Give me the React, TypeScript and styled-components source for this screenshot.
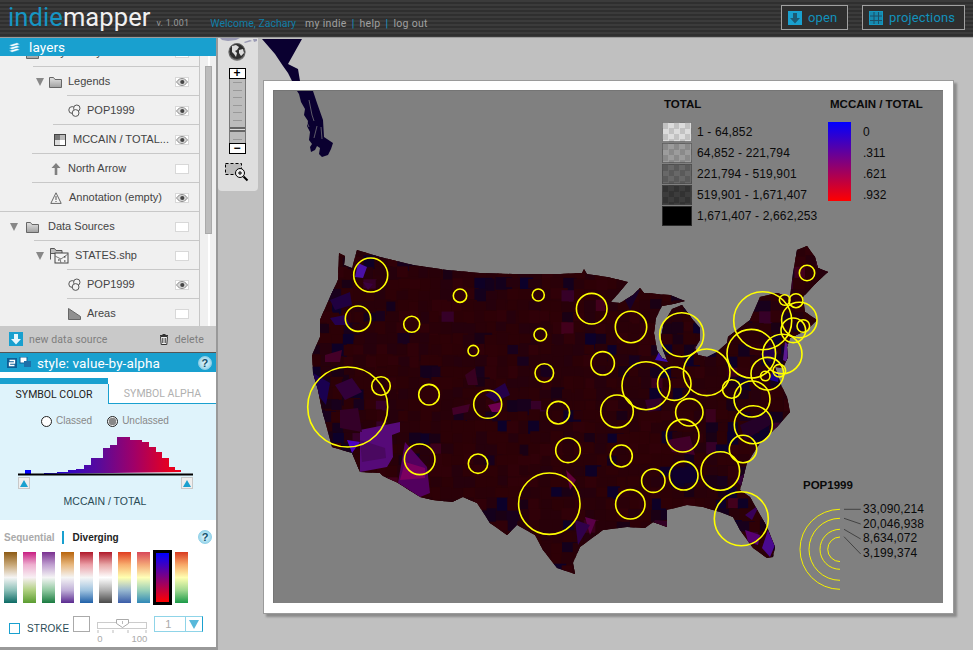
import React from 'react'
import styled, { createGlobalStyle } from 'styled-components'

const BLUE = '#19a0cf'
const UI = '"Roboto", "Liberation Sans", sans-serif'
const SANS = '"Liberation Sans", Arial, sans-serif'

const GlobalStyle = createGlobalStyle`
  html, body { margin: 0; padding: 0; background: #c0c0c0; }
  body { font-family: ${SANS}; overflow: hidden; }
  * { box-sizing: border-box; }
`

/* ---------- map data, page coordinates ---------- */

const US_OUTLINE =
  '339,253 345,256 344,265 352,268 357,250 380,257 413,265 447,270 480,273 513,274 560,274 582,273 584,269 587,274 607,277 628,282 ' +
  '611,302 620,303 633,295 640,288 644,293 670,295 685,301 673,304 662,306 656,318 654,333 657,350 662,358 667,360 663,350 661,337 664,323 672,309 682,305 ' +
  '693,320 700,328 700,340 695,348 698,355 707,357 717,352 727,343 728,337 737,330 750,320 760,297 777,293 790,297 793,273 797,250 807,246 ' +
  '815,257 818,268 828,272 817,282 803,297 805,312 817,320 807,330 790,338 787,347 788,357 783,368 775,367 782,387 787,397 790,412 777,427 ' +
  '760,443 747,463 740,490 750,497 767,527 775,547 773,557 767,558 753,548 740,530 733,517 720,512 703,507 687,505 667,510 667,527 653,522 ' +
  '645,528 627,527 603,530 580,547 573,563 575,574 557,568 543,550 535,535 517,525 507,535 490,523 477,503 463,497 452,502 433,500 420,497 ' +
  '398,483 383,476 380,473 360,472 352,453 332,447 328,432 322,410 318,390 313,373 312,355 320,337 320,320 330,297 338,280'

const PATCHES: [string, string][] = [
  ['360,430 400,422 400,432 392,435 393,457 387,467 360,472', '#560a78'],
  ['360,440 385,448 386,458 362,462', '#4a0860'],
  ['405,442 427,467 430,493 420,497 398,483', '#52005e'],
  ['405,462 425,468 425,478 400,480', '#7c0060'],
  ['347,440 360,442 352,453', '#4a00c0'],
  ['358,263 367,267 363,278 355,277', '#4a10a8'],
  ['363,282 373,284 368,290', '#3a0040'],
  ['313,373 330,383 326,405 318,395', '#1a0050'],
  ['335,385 352,378 362,392 345,400', '#32003a'],
  ['340,410 358,408 362,432 340,428', '#340028'],
  ['325,355 342,350 340,362 325,362', '#440028'],
  ['330,300 350,292 352,305 335,310', '#200040'],
  ['330,318 345,315 350,325 335,325', '#240050'],
  ['452,408 470,404 468,412 453,415', '#420028'],
  ['485,395 505,383 510,395 495,402', '#240048'],
  ['488,405 502,402 500,412 492,412', '#700050'],
  ['465,375 475,368 478,385 468,385', '#380020'],
  ['768,530 775,545 770,557 762,548', '#4a0a90'],
  ['745,530 760,535 758,545 748,542', '#560070'],
  ['760,504 752,520 745,515', '#380058'],
  ['785,342 789,345 787,362 783,360', '#5a1a90'],
  ['760,355 770,345 778,352 770,362', '#240048'],
  ['772,372 780,370 778,382 770,380', '#160090'],
  ['655,360 660,350 668,362', '#3a10b0'],
  ['640,545 655,520 680,522 660,540', '#320024'],
  ['585,517 596,520 590,535', '#5a0048'],
  ['566,470 576,480 570,490', '#60003a'],
  ['575,520 590,525 578,545', '#30004a'],
  ['645,400 662,398 660,410 648,412', '#32002a'],
  ['667,440 690,436 695,455 672,452', '#400028'],
  ['672,470 695,465 700,482 675,484', '#0e002c'],
  ['740,425 770,412 770,425 745,440', '#240028'],
  ['735,480 750,470 745,490', '#320038'],
  ['620,290 640,290 630,310', '#180028'],
]

const mulberry = (seed: number) => () => {
  seed |= 0
  seed = (seed + 0x6d2b79f5) | 0
  let t = Math.imul(seed ^ (seed >>> 15), 1 | seed)
  t = (t + Math.imul(t ^ (t >>> 7), 61 | t)) ^ t
  return ((t ^ (t >>> 14)) >>> 0) / 4294967296
}

const makeTiles = () => {
  const rnd = mulberry(1999)
  const warm = ['#2a0008', '#2c0006', '#280009', '#2e0006', '#26000c', '#300008']
  const cool = ['#1a0014', '#14001c', '#0e0026', '#18001c', '#0c002a']
  const hot = ['#3a001c', '#360028', '#42001c']
  const tiles: { x: number; y: number; w: number; h: number; fill: string }[] = []
  for (let y = 244; y < 580; y += 11) {
    for (let x = 308; x < 832; x += 11) {
      const east = x > 640
      const west = x < 350
      const r = rnd()
      const coolOdds = west ? 0.45 : east ? 0.28 : 0.12
      const hotOdds = east ? 0.06 : 0.015
      const set = r < hotOdds ? hot : r < hotOdds + coolOdds ? cool : warm
      tiles.push({
        x: x + rnd() * 3,
        y: y + rnd() * 3,
        w: 9 + rnd() * 9,
        h: 9 + rnd() * 9,
        fill: set[Math.floor(rnd() * set.length)],
      })
    }
  }
  return tiles
}

const TILES = makeTiles()

const SYMBOLS: [number, number, number][] = [
  [370.7, 275, 17], [358, 318.7, 12.7], [411.7, 324.3, 8], [460, 295.7, 6.7], [538.3, 295, 6],
  [540.3, 334.7, 6.3], [473.3, 350.7, 5.3], [544.3, 373, 9.3], [429, 394.7, 10.3], [487.7, 404.3, 14],
  [558.3, 412.7, 11.3], [381, 386, 9.3], [347.7, 407, 40], [568, 450.3, 12.3], [419.7, 459.3, 15.3],
  [478, 463.7, 9.7], [549.3, 503.7, 30.7], [591.7, 308.7, 15.3], [631, 327, 15.7], [602.7, 363.3, 11.7],
  [681.7, 334.7, 22], [646, 385.7, 24], [674.3, 383.7, 16.7], [706.7, 372.3, 23.3], [617, 411.3, 16.3],
  [689.3, 412.3, 13.7], [682.7, 435.7, 16.3], [621.3, 456, 11], [653.3, 480.7, 11.7], [683.7, 475.7, 14.3],
  [720.3, 471, 19.3], [630.3, 504.3, 14.7], [741.3, 518.7, 27], [743, 449, 13.7], [753.3, 424.7, 19],
  [752, 399, 18], [731.7, 389, 9.3], [751.3, 353.7, 24.3], [782.3, 354, 19.7], [767.3, 373.7, 16.3],
  [779.3, 370.7, 6.3], [765.3, 376, 4.7], [762.7, 320.7, 29], [799.3, 320, 17.7], [793.3, 330.3, 12.3],
  [803.3, 326, 6.3], [784.7, 300, 5.3], [796, 300.7, 7], [807, 273, 7.7],
]

const TOTAL_LEGEND: [string, string, string][] = [
  ['1 - 64,852', '#dcdcdc', '#c2c2c2'],
  ['64,852 - 221,794', '#9c9c9c', '#8a8a8a'],
  ['221,794 - 519,901', '#686868', '#5a5a5a'],
  ['519,901 - 1,671,407', '#3c3c3c', '#323232'],
  ['1,671,407 - 2,662,253', '#000', '#000'],
]

const POP_RADII = [40, 31, 20, 12.3]

const RAMPS: string[][] = [
  ['#8c5a14', '#c8a878', '#f5f5f5', '#8cc0b8', '#0c6a64'],
  ['#c81e82', '#eeb0d0', '#f8f0f4', '#b0d080', '#5a9c30'],
  ['#7a3090', '#c0a0d0', '#f5f5f5', '#90c8a0', '#1a7a40'],
  ['#b8640c', '#e8b880', '#f5f5f5', '#c0b0d8', '#5a2a90'],
  ['#b0182a', '#eca0a8', '#f5f5f5', '#a0c4e0', '#2060a8'],
  ['#b0182a', '#e8a8a8', '#ffffff', '#b0b0b0', '#4a4a4a'],
  ['#e03c20', '#f8b070', '#ffffb0', '#98b8d0', '#3a5ca8'],
  ['#d84858', '#f4a878', '#ffffb8', '#98d0b8', '#3088b8'],
  ['#0000ff', '#ff0000'],
  ['#d83a20', '#f8a868', '#ffffb0', '#a0d890', '#1a9a48'],
]

/* ---------- small drawings ---------- */

const FolderIcon = () => (
  <svg width="13" height="12" viewBox="0 0 13 12">
    <defs>
      <linearGradient id="folderFill" x1="0" y1="0" x2="0" y2="1">
        <stop offset="0" stopColor="#e2e2e2" />
        <stop offset="1" stopColor="#a0a0a0" />
      </linearGradient>
    </defs>
    <path d="M.5 11.5V1.5h4l1.5 2h6.5v8z" fill="url(#folderFill)" stroke="#666" />
  </svg>
)

const CirclesIcon = () => (
  <svg width="13" height="13" viewBox="0 0 13 13">
    <g fill="#f4f4f4" stroke="#555">
      <circle cx="4.2" cy="6" r="3.4" />
      <circle cx="8.8" cy="4.2" r="3.2" />
      <circle cx="7.6" cy="9" r="3.4" />
    </g>
  </svg>
)

const ChoroplethIcon = () => (
  <svg width="12" height="12" viewBox="0 0 12 12">
    <rect x=".5" y=".5" width="11" height="11" fill="#fff" stroke="#444" />
    <rect x="1" y="1" width="5" height="5" fill="#777" />
    <rect x="6" y="1" width="5" height="5" fill="#bbb" />
    <rect x="1" y="6" width="5" height="5" fill="#ddd" />
  </svg>
)

const ArrowIcon = () => (
  <svg width="10" height="12" viewBox="0 0 10 12">
    <path d="M5 0l4.5 5H6.3v7H3.7V5H.5z" fill="#808080" />
  </svg>
)

const WarnIcon = () => (
  <svg width="12" height="12" viewBox="0 0 12 12">
    <path d="M6 .8l5.2 10.6H.8z" fill="#f4f4f4" stroke="#666" />
    <path d="M6 4v4M6 9v1" stroke="#555" />
  </svg>
)

const ShapeFolderIcon = () => (
  <svg width="19" height="16" viewBox="0 0 19 16">
    <path d="M.5 11.5V.5h4l1.5 2h6v3H.5" fill="#bbb" stroke="#555" />
    <rect x="5" y="5" width="13" height="10" fill="#f4f4f4" stroke="#444" />
    <path d="M5 8l6 3 7-5M10 11l1 4" stroke="#777" fill="none" />
    <path d="M8 12h1.5M14 9h1.5M14 13h1.5" stroke="#222" />
  </svg>
)

const AreaIcon = () => (
  <svg width="13" height="12" viewBox="0 0 13 12">
    <path d="M.5.5l12 8v3H.5z" fill="#909090" stroke="#666" />
  </svg>
)

const Eye = () => (
  <svg width="12" height="8" viewBox="0 0 12 8">
    <path d="M.5 4C2.5 1.2 4.2.5 6 .5s3.500.7 5.500 3.500C9.500 6.800 7.800 7.500 6 7.500S2.500 6.800.5 4z" fill="#d8d8d8" stroke="#777" strokeWidth=".8" />
    <circle cx="6.300" cy="4" r="2.100" fill="#444" />
  </svg>
)

const Triangle = () => (
  <svg width="8" height="8" viewBox="0 0 8 8">
    <path d="M0 0h8L4 8z" fill="#888" />
  </svg>
)

const DownBox = ({ size }: { size: number }) => (
  <svg width={size} height={size} viewBox="0 0 14 14">
    <rect width="14" height="14" fill={BLUE} />
    <path d="M5 2h4v5h3l-5 5.500L2 7h3z" fill="#1d5a74" />
  </svg>
)

const FootDown = () => (
  <svg width="14" height="14" viewBox="0 0 14 14">
    <rect width="14" height="14" fill={BLUE} />
    <path d="M5 2h4v5h3l-5 5.500L2 7h3z" fill="#e6f6fc" />
  </svg>
)

const StackIcon = () => (
  <svg width="13" height="11" viewBox="0 0 13 11">
    <path d="M1 3.200L9 .8l3 1.400-8 2.400zM1 6l8-2.400 3 1.400-8 2.400zM1 8.800l8-2.400 3 1.400-8 2.400z" fill="#fff" stroke={BLUE} strokeWidth=".4" />
  </svg>
)

const StyleIcon = () => (
  <svg width="24" height="12" viewBox="0 0 24 12">
    <rect x="0" y="1" width="10" height="10" fill="#0d5f96" />
    <path d="M2.500 3.500h5v2.500h-5v2.500h5" fill="none" stroke="#fff" strokeWidth="1.300" />
    <rect x="13" y="0" width="7" height="6" fill="#fff" stroke="#0d5f96" />
    <rect x="17" y="4" width="7" height="6" fill="#1d6fa8" />
  </svg>
)

const TrashIcon = () => (
  <svg width="10" height="12" viewBox="0 0 10 12">
    <path d="M1 2.500h8M3.500 1.500h3" stroke="#333" />
    <path d="M1.500 3.500h7l-.7 8H2.200z" fill="#eee" stroke="#333" />
    <path d="M3.800 5v5M6.200 5v5" stroke="#333" />
  </svg>
)

const GlobeIcon = () => (
  <svg width="20" height="20" viewBox="0 0 20 20">
    <circle cx="10" cy="10.500" r="8.500" fill="#888" />
    <circle cx="10" cy="9.500" r="8" fill="#2e2e2e" stroke="#666" />
    <path d="M5 4l4-1 3 2-2 3-2 1 2 2-1 4-2-3-2-2zM12 8l4-1 1 4-3 3-2-3z" fill="#dcdcdc" />
  </svg>
)

const ZoomRectIcon = () => (
  <svg width="24" height="20" viewBox="0 0 24 20">
    <rect x=".5" y=".5" width="16" height="11" fill="#bbb" stroke="#000" strokeDasharray="3 2" />
    <circle cx="15" cy="10" r="4.500" fill="#eee" stroke="#000" />
    <path d="M13 10h4M15 8v4" stroke="#000" />
    <path d="M18.500 13.500l4 4" stroke="#000" strokeWidth="2" />
  </svg>
)

const GridIcon = () => (
  <svg width="14" height="14" viewBox="0 0 14 14">
    <rect width="14" height="14" fill="#1689ae" />
    <path d="M1 5h12M1 9.500h12M5 1v12M9.500 1v12" stroke="#1d4f66" />
    <rect x=".5" y=".5" width="13" height="13" fill="none" stroke="#1597c0" />
  </svg>
)

const Histogram = () => (
  <svg width="176" height="42" viewBox="0 0 176 42">
    <defs>
      <linearGradient id="histFill" x1="0" x2="1" y1="0" y2="0">
        <stop offset="0" stopColor="#0000ff" />
        <stop offset="0.48" stopColor="#5a0a9a" />
        <stop offset="0.7" stopColor="#a00068" />
        <stop offset="0.93" stopColor="#e8001e" />
      </linearGradient>
    </defs>
    <path
      d="M7 40V36h6v4zM26 40v-1h13v-1h11v-2h8v-1h8v-4h7v-7h12v-10h7v-3h7V3h13v3h12v2h7v5h7v5h6v6h7v9h6v3h6v2z"
      fill="url(#histFill)"
    />
    <rect x="0" y="39.500" width="175" height="2" fill="#000" />
  </svg>
)

/* ---------- header ---------- */

const Page = styled.div`
  width: 973px;
  height: 650px;
  overflow: hidden;
  display: flex;
  flex-direction: column;
  background: #c0c0c0;
`

const TopBar = styled.header`
  height: 38px;
  flex: none;
  display: flex;
  align-items: flex-start;
  padding-left: 8px;
  border-bottom: 1px solid #9c9c9c;
  background: repeating-linear-gradient(#3b3b3b 0 2px, #2f2f2f 2px 4px);
  font-family: ${UI};
`

const Logo = styled.div`
  font-size: 25.500px;
  font-weight: 400;
  line-height: 30px;
  margin-top: 2px;
  letter-spacing: .1px;
  color: #f0f0f0;
  span { color: #1696c4; }
`

const Version = styled.div`
  font-size: 9px;
  color: #999;
  margin: 18px 0 0 6px;
  letter-spacing: .2px;
`

const Welcome = styled.nav`
  margin: 17px 0 0 21px;
  font-size: 10.500px;
  display: flex;
  gap: 5px;
  color: #a0a0a0;
  letter-spacing: .3px;
  b { font-weight: 400; color: #0f7ea8; margin-right: 4px; letter-spacing: 0; }
  i { font-style: normal; color: #1696c4; }
`

const TopButton = styled.button<{ $width: number; $gapRight: number }>`
  width: ${p => p.$width}px;
  height: 25px;
  margin: 5px ${p => p.$gapRight}px 0 0;
  padding: 0 0 0 6px;
  display: flex;
  align-items: center;
  gap: 6px;
  background: #2e2e2e;
  border: 1px solid #a0a0a0;
  color: #1291bb;
  font: 13px ${UI};
  letter-spacing: .15px;
`

const Spacer = styled.div`
  flex: 1;
`

/* ---------- layers panel ---------- */

const Workspace = styled.div`
  flex: 1;
  min-height: 0;
  display: flex;
  align-items: flex-start;
`

const Sidebar = styled.aside`
  width: 218px;
  height: 612px;
  flex: none;
  position: relative;
  z-index: 2;
  display: flex;
  flex-direction: column;
  background: #fff;
  border-right: 2px solid #999;
  border-bottom: 3px solid #999;
`

const PanelHead = styled.div<{ $height: number }>`
  height: ${p => p.$height}px;
  flex: none;
  display: flex;
  align-items: center;
  background: ${BLUE};
  color: #fff;
  font: 13.500px ${UI};
  letter-spacing: .1px;
`

const LayerArea = styled.div`
  height: 270px;
  flex: none;
  display: flex;
  background: #f0f0f0;
  overflow: hidden;
`

const LayerList = styled.div`
  width: 200px;
  flex: none;
  margin-top: -18px;
  border-right: 1px solid #c6c6c6;
`

const Row = styled.div<{ $left: number; $rule: number }>`
  height: 29px;
  display: flex;
  align-items: center;
  padding: 0 10px 0 ${p => p.$left}px;
  background: linear-gradient(#c8c8c8, #c8c8c8) no-repeat right bottom / calc(100% - ${p => p.$rule}px) 1px;
  color: #444;
  font: 11px ${SANS};
`

const RowIcon = styled.span<{ $width: number }>`
  width: ${p => p.$width}px;
  flex: none;
  display: flex;
  align-items: center;
`

const RowLabel = styled.span`
  flex: 1;
  white-space: nowrap;
  margin-top: -2px;
`

const Toggle = styled.span`
  width: 14px;
  height: 10px;
  flex: none;
  display: flex;
  align-items: center;
  justify-content: center;
  background: #fff;
  border: 1px solid #d8d8d8;
  overflow: hidden;
`

const ScrollTrack = styled.div`
  flex: 1;
  padding: 10px 0 0 5px;
  background: linear-gradient(#fff, #fff) no-repeat 8px 0 / 2px 100%;
`

const ScrollThumb = styled.div`
  width: 7px;
  height: 168px;
  background: #bcbcbc;
  border: 1px solid #aaa;
`

const LayerFoot = styled.div`
  height: 26px;
  flex: none;
  display: flex;
  align-items: center;
  padding: 0 12px 0 9px;
  gap: 6px;
  background: #c9c9c9;
  color: #7e7e7e;
  font: 10.500px ${UI};
  letter-spacing: .1px;
`

/* ---------- style panel ---------- */

const Tabs = styled.div`
  height: 26px;
  margin-top: 6px;
  flex: none;
  display: flex;
`

const Tab = styled.div<{ $active?: boolean }>`
  width: 108px;
  flex: none;
  display: flex;
  align-items: center;
  justify-content: center;
  font: 10.500px ${UI};
  color: ${p => (p.$active ? '#222' : '#b0b0b0')};
  background: ${p => (p.$active ? '#dff3fb' : '#fff')};
  border-top: ${p => (p.$active ? `6px solid ${BLUE}` : '0')};
  border-left: ${p => (p.$active ? '0' : `1px solid ${BLUE}`)};
  border-bottom: ${p => (p.$active ? '0' : `1px solid ${BLUE}`)};
  margin-top: ${p => (p.$active ? '0' : '6px')};
`

const ClassPane = styled.div`
  height: 116px;
  flex: none;
  display: flex;
  flex-direction: column;
  align-items: stretch;
  background: #dff3fb;
  padding-top: 11px;
`

const RadioRow = styled.div`
  display: flex;
  padding-left: 41px;
  font: 10px ${SANS};
  color: #888;
  line-height: 12px;
`

const RadioItem = styled.label`
  display: flex;
  align-items: center;
  gap: 4px;
  margin-right: 15px;
`

const Radio = styled.span<{ $on?: boolean }>`
  width: 11px;
  height: 11px;
  border-radius: 50%;
  border: 1px solid #222;
  background: ${p => (p.$on ? 'radial-gradient(#888 0 3.500px, #eee 4px)' : '#fff')};
`

const HistogramBox = styled.div`
  height: 42px;
  margin: 7px 0 0 18px;
`

const Handles = styled.div`
  display: flex;
  justify-content: space-between;
  padding: 1px 23px 0 18px;
`

const Handle = styled.span`
  width: 12px;
  height: 12px;
  display: flex;
  align-items: center;
  justify-content: center;
  background: #eee;
  border: 1px solid #c8c8c8;
  &::after {
    content: '';
    border-left: 4px solid transparent;
    border-right: 4px solid transparent;
    border-bottom: 7px solid ${BLUE};
  }
`

const FieldName = styled.div`
  text-align: center;
  margin-top: 6px;
  padding-right: 6px;
  font: 10.500px ${SANS};
  color: #2a4a55;
`

const RampPane = styled.div`
  flex: 1;
  padding: 10px 0 0 4px;
  background: #fff;
`

const RampTabs = styled.div`
  height: 14px;
  display: flex;
  align-items: center;
  font: bold 10px ${SANS};
  color: #aaa;
  padding-right: 4px;
  b { color: #222; }
`

const Divide = styled.span`
  width: 2px;
  height: 13px;
  margin: 0 9px 0 7px;
  background: ${BLUE};
`

const Help = styled.span<{ $size: number }>`
  width: ${p => p.$size}px;
  height: ${p => p.$size}px;
  margin-left: auto;
  border-radius: 50%;
  display: flex;
  align-items: center;
  justify-content: center;
  background: radial-gradient(#e8f8fd, #7fcbe6);
  border: 1px solid #8fd0e8;
  color: #14506a;
  font: bold 11px ${SANS};
`

const Ramps = styled.div`
  display: flex;
  align-items: center;
  gap: 6px;
  margin-top: 6px;
  height: 55px;
`

const Ramp = styled.div<{ $selected?: boolean }>`
  width: ${p => (p.$selected ? 19 : 13)}px;
  height: ${p => (p.$selected ? 55 : 51)}px;
  margin: 0 ${p => (p.$selected ? -3 : 0)}px;
  border: ${p => (p.$selected ? '3px solid #000' : '0')};
`

const StrokeRow = styled.div`
  display: flex;
  align-items: flex-start;
  margin-top: 11px;
  padding-left: 5px;
  height: 30px;
  font: 10px ${SANS};
  color: #2a4a55;
`

const CheckBox = styled.span`
  width: 11px;
  height: 11px;
  margin-top: 7px;
  border: 1px solid ${BLUE};
`

const StrokeLabel = styled.span`
  margin: 7px 4px 0 7px;
  line-height: 12px;
  letter-spacing: .2px;
`

const StrokeSwatch = styled.span`
  width: 17px;
  height: 16px;
  border: 1px solid #aaa;
`

const OpacitySlider = styled.div`
  width: 50px;
  margin: 3px 7px 0 7px;
  color: #aaa;
  font: 9.500px ${SANS};
`

const SliderLabels = styled.div`
  display: flex;
  justify-content: space-between;
  line-height: 10px;
  margin-top: 1px;
`

const Picker = styled.div`
  width: 49px;
  height: 16px;
  display: flex;
  border: 1px solid #8fd4e8;
  border-right: 1px solid ${BLUE};
  color: #aaa;
  font: 11px ${SANS};
`

const PickerValue = styled.span`
  flex: 1;
  padding-left: 10px;
  line-height: 14px;
  border-right: 1px solid #8fd4e8;
`

const PickerArrow = styled.span`
  width: 16px;
  display: flex;
  align-items: center;
  justify-content: center;
  &::after {
    content: '';
    border-left: 5px solid transparent;
    border-right: 5px solid transparent;
    border-top: 9px solid #58b8da;
  }
`

/* ---------- zoom tools ---------- */

const ToolStrip = styled.div`
  width: 40px;
  height: 153px;
  flex: none;
  position: relative;
  z-index: 2;
  display: flex;
  flex-direction: column;
  align-items: center;
  padding: 4px 2px 0 0;
  background: #dedede;
  border-radius: 0 0 4px 4px;
`

const Islands = styled.svg`
  position: absolute;
  left: 0;
  top: 0;
`

const ToolGap = styled.span<{ $height: number }>`
  height: ${p => p.$height}px;
  flex: none;
`

const ZoomBox = styled.div`
  width: 17px;
  height: 11px;
  flex: none;
  display: flex;
  align-items: center;
  justify-content: center;
  background: #fff;
  border: 1px solid #000;
  color: #000;
  font: bold 12px/9px ${SANS};
`

const ZoomTrack = styled.div`
  width: 17px;
  height: 64px;
  flex: none;
  display: flex;
  flex-direction: column;
  justify-content: space-around;
  align-items: center;
  background: #bcbcbc;
  border: solid #777;
  border-width: 0 1px;
`

const ZoomTick = styled.span<{ $on?: boolean }>`
  display: block;
  width: ${p => (p.$on ? 15 : 9)}px;
  height: ${p => (p.$on ? 5 : 1)}px;
  background: ${p => (p.$on ? 'linear-gradient(#666 0 2px, #ddd 2px 3px, #666 3px)' : '#999')};
`

/* ---------- map ---------- */

const Stage = styled.main`
  flex: 1;
  position: relative;
  padding: 42px 0 0 5px;
`

const Panhandle = styled.svg`
  position: absolute;
  left: 0;
  top: 0;
  pointer-events: none;
`

const Paper = styled.div`
  width: 691px;
  height: 534px;
  padding: 9px 10px 10px 9px;
  background: #fff;
  border: 1px solid #9a9a9a;
  box-shadow: 3px 3px 2px #8c8c8c;
`

const MapFrame = styled.div`
  position: relative;
  width: 670px;
  height: 513px;
  background: #808080;
  overflow: hidden;
  border-top: 1px solid #757575;
  border-left: 1px solid #757575;
  color: #0a0a0a;
  font: 12px ${SANS};
`

const MapSvg = styled.svg`
  position: absolute;
  left: -1px;
  top: -1px;
`

const MapLegend = styled.div<{ $x: number; $y: number }>`
  position: absolute;
  left: ${p => p.$x - 274}px;
  top: ${p => p.$y - 91}px;
`

const LegendTitle = styled.div`
  font: bold 11.500px/13px ${SANS};
  white-space: nowrap;
`

const ClassRow = styled.div`
  display: flex;
  align-items: center;
  height: 20.900px;
  gap: 5px;
  white-space: nowrap;
  letter-spacing: .14px;
`

const ClassSwatch = styled.span<{ $a: string; $b: string }>`
  width: 30px;
  height: 20px;
  flex: none;
  background: repeating-conic-gradient(${p => p.$a} 0 25%, ${p => p.$b} 0 50%) 0 0 / 11px 11px;
  border: 1px solid rgba(70, 70, 70, .6);
`

const GradientKey = styled.div`
  display: flex;
  gap: 12px;
  margin: 11px 0 0 -2px;
`

const GradientBar = styled.div`
  width: 23px;
  height: 79px;
  background: linear-gradient(#0000ff, #ff0000);
`

const GradientLabels = styled.div`
  line-height: 21px;
`

const PopLabels = styled.div`
  line-height: 14.700px;
  letter-spacing: .1px;
  white-space: nowrap;
`

const HeadIcon = styled.span`
  width: 29px;
  padding-left: 8px;
  display: flex;
`

const StyleHead = styled(PanelHead)`
  border-top: 1px solid #555;
  padding: 0 4px 0 7px;
  gap: 6px;
`

const ExpanderGap = styled.span<{ $width: number }>`
  width: ${p => p.$width}px;
  flex: none;
`

const Layer = ({
  left, rule, icon, width, label, eye,
}: {
  left: number; rule: number; icon: React.ReactNode; width: number; label: string; eye?: boolean
}) => (
  <Row $left={left} $rule={rule}>
    <RowIcon $width={width}>{icon}</RowIcon>
    <RowLabel>{label}</RowLabel>
    <Toggle>{eye ? <Eye /> : null}</Toggle>
  </Row>
)

const Expander = ({ gap, children }: { gap: number; children: React.ReactNode }) => (
  <>
    <Triangle />
    <ExpanderGap $width={gap} />
    {children}
  </>
)

export default function App() {
  return (
    <Page>
      <GlobalStyle />
      <TopBar>
        <Logo><span>indie</span>mapper</Logo>
        <Version>v. 1.001</Version>
        <Welcome>
          <b>Welcome, Zachary</b>
          my indie <i>|</i> help <i>|</i> log out
        </Welcome>
        <Spacer />
        <TopButton $width={67} $gapRight={14}><DownBox size={14} /> open</TopButton>
        <TopButton $width={103} $gapRight={8}><GridIcon /> projections</TopButton>
      </TopBar>

      <Workspace>
        <Sidebar>
          <PanelHead $height={18}>
            <HeadIcon><StackIcon /></HeadIcon>
            layers
          </PanelHead>
          <LayerArea>
            <LayerList>
              <Layer left={26} rule={33} width={22} icon={<FolderIcon />} label="Layout Layers" />
              <Layer left={36} rule={67} width={32} icon={<Expander gap={5}><FolderIcon /></Expander>} label="Legends" eye />
              <Layer left={68} rule={53} width={19} icon={<CirclesIcon />} label="POP1999" eye />
              <Layer left={54} rule={32} width={19} icon={<ChoroplethIcon />} label="MCCAIN / TOTAL..." eye />
              <Layer left={51} rule={32} width={17} icon={<ArrowIcon />} label="North Arrow" />
              <Layer left={50} rule={0} width={19} icon={<WarnIcon />} label="Annotation (empty)" eye />
              <Layer left={10} rule={34} width={38} icon={<Expander gap={8}><FolderIcon /></Expander>} label="Data Sources" />
              <Layer left={36} rule={67} width={39} icon={<Expander gap={6}><ShapeFolderIcon /></Expander>} label="STATES.shp" />
              <Layer left={68} rule={67} width={19} icon={<CirclesIcon />} label="POP1999" eye />
              <Layer left={68} rule={67} width={19} icon={<AreaIcon />} label="Areas" />
            </LayerList>
            <ScrollTrack><ScrollThumb /></ScrollTrack>
          </LayerArea>
          <LayerFoot>
            <FootDown />
            <span>new data source</span>
            <Spacer />
            <TrashIcon />
            <span>delete</span>
          </LayerFoot>
          <StyleHead $height={20}>
            <StyleIcon />
            style: value-by-alpha
            <Help $size={14}>?</Help>
          </StyleHead>
          <Tabs>
            <Tab $active>SYMBOL COLOR</Tab>
            <Tab>SYMBOL ALPHA</Tab>
          </Tabs>
          <ClassPane>
            <RadioRow>
              <RadioItem><Radio /> Classed</RadioItem>
              <RadioItem><Radio $on /> Unclassed</RadioItem>
            </RadioRow>
            <HistogramBox><Histogram /></HistogramBox>
            <Handles><Handle /><Handle /></Handles>
            <FieldName>MCCAIN / TOTAL</FieldName>
          </ClassPane>
          <RampPane>
            <RampTabs>
              Sequential<Divide /><b>Diverging</b>
              <Help $size={14}>?</Help>
            </RampTabs>
            <Ramps>
              {RAMPS.map((stops, i) => (
                <Ramp
                  key={i}
                  $selected={i === 8}
                  style={{ background: `linear-gradient(${stops.join(', ')})` }}
                />
              ))}
            </Ramps>
            <StrokeRow>
              <CheckBox />
              <StrokeLabel>STROKE</StrokeLabel>
              <StrokeSwatch />
              <OpacitySlider>
                <svg width="50" height="14" viewBox="0 0 50 14" display="block">
                  <rect x=".5" y="3.500" width="49" height="6" fill="#fff" stroke="#ccc" />
                  <path d="M19.500.5h12v4l-6 4-6-4z" fill="#fff" stroke="#aaa" />
                  <path d="M25.500 2v3M1 11v3M16 11v3M31 11v3M49 11v3" stroke="#bbb" />
                </svg>
                <SliderLabels><span>0</span><span>100</span></SliderLabels>
              </OpacitySlider>
              <Picker><PickerValue>1</PickerValue><PickerArrow /></Picker>
            </StrokeRow>
          </RampPane>
        </Sidebar>

        <ToolStrip>
          <Islands width="40" height="8" viewBox="0 0 40 8">
            <path d="M2 0h20l-4 2-8 1-6-1zM26 4l6-2 2 1-7 2zM35 1h4v2l-3 1z" fill="#9a9ab4" />
          </Islands>
          <GlobeIcon />
          <ToolGap $height={6} />
          <ZoomBox>+</ZoomBox>
          <ZoomTrack>
            {[0, 1, 2, 3, 4, 5, 6, 7].map(n => <ZoomTick key={n} $on={n === 6} />)}
          </ZoomTrack>
          <ZoomBox>−</ZoomBox>
          <ToolGap $height={9} />
          <ZoomRectIcon />
        </ToolStrip>

        <Stage>
          <Panhandle width="60" height="43" viewBox="258 37 60 43">
            <path d="M262 38H302L288 63l10 5 2 12h-8l-4-8-5-7-8-12z" fill="#0a0030" />
          </Panhandle>
          <Paper>
            <MapFrame>
              <MapSvg width="670" height="513" viewBox="273 90 670 513">
                <defs>
                  <clipPath id="usClip"><polygon points={US_OUTLINE} /></clipPath>
                </defs>
                <path
                  d="M297 91H313l4 12 6 17 1 17 9 6-2 6-3 6-6 2-3-3 1-6-3-2-2 4-4 2-1-5 2-3-3-4 1-8-3-6 1-5-4-6 1-6-4-7-2-8z"
                  fill="#0a0030"
                />
                <path d="M309 100l3 15 2 6M305 118l4 9M317 126l-3 12M321 127l1 12" stroke="#808080" strokeWidth=".7" fill="none" />
                <polygon points={US_OUTLINE} fill="#2a0008" />
                <g clipPath="url(#usClip)">
                  {TILES.map((t, i) => (
                    <rect key={i} x={t.x} y={t.y} width={t.w} height={t.h} fill={t.fill} />
                  ))}
                  {PATCHES.map(([pts, fill], i) => <polygon key={i} points={pts} fill={fill} />)}
                </g>
                <g fill="none" stroke="#ffff00" strokeWidth="1.600">
                  {SYMBOLS.map(([cx, cy, r], i) => <circle key={i} cx={cx} cy={cy} r={r} />)}
                </g>
                <g fill="none" stroke="#f4f000" strokeWidth="1">
                  {POP_RADII.map(r => (
                    <path key={r} d={`M840 ${549.3 - r}A${r} ${r} 0 0 0 840 ${549.3 + r}`} />
                  ))}
                </g>
                <path
                  d="M844 509.300H860.700M844 518.300L860.700 524M844 529.300L860.700 539M844 536.700L860.700 554"
                  stroke="#333"
                  strokeWidth=".8"
                />
              </MapSvg>

              <MapLegend $x={664} $y={98}><LegendTitle>TOTAL</LegendTitle></MapLegend>
              <MapLegend $x={662} $y={122}>
                {TOTAL_LEGEND.map(([label, a, b]) => (
                  <ClassRow key={label}>
                    <ClassSwatch $a={a} $b={b} />
                    {label}
                  </ClassRow>
                ))}
              </MapLegend>

              <MapLegend $x={830} $y={98}>
                <LegendTitle>MCCAIN / TOTAL</LegendTitle>
                <GradientKey>
                  <GradientBar />
                  <GradientLabels>
                    <div>0</div><div>.311</div><div>.621</div><div>.932</div>
                  </GradientLabels>
                </GradientKey>
              </MapLegend>

              <MapLegend $x={803} $y={479}><LegendTitle>POP1999</LegendTitle></MapLegend>
              <MapLegend $x={863} $y={502}>
                <PopLabels>
                  <div>33,090,214</div><div>20,046,938</div><div>8,634,072</div><div>3,199,374</div>
                </PopLabels>
              </MapLegend>
            </MapFrame>
          </Paper>
        </Stage>
      </Workspace>
    </Page>
  )
}
